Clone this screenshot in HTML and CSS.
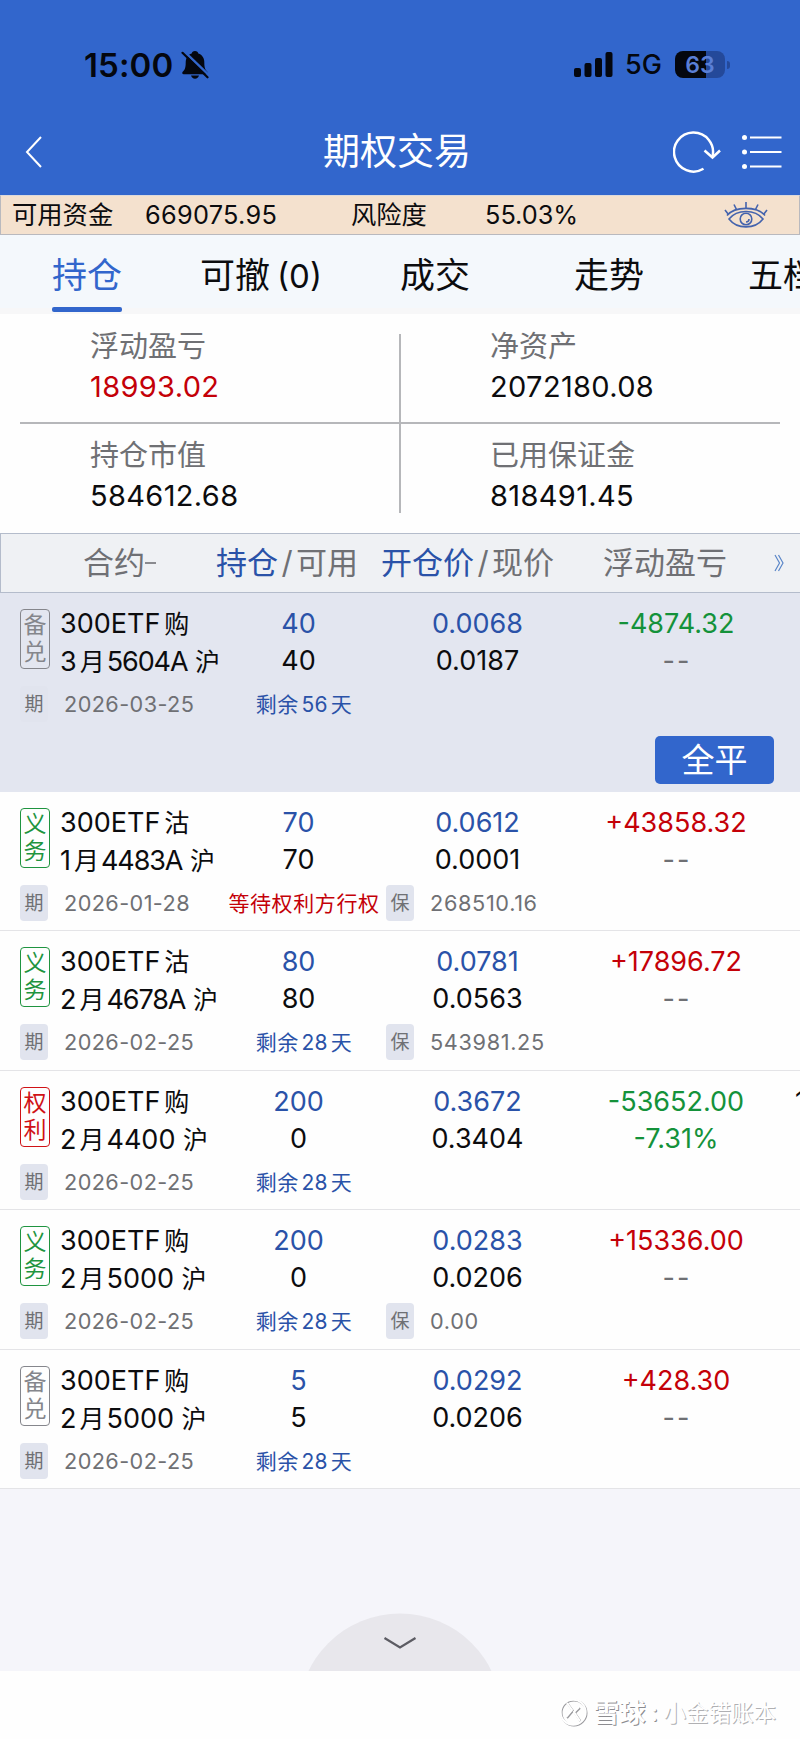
FILE: index.html
```html
<!DOCTYPE html>
<html lang="zh-CN">

<head>
	<meta charset="UTF-8">
	<meta name="viewport"
		content="width=device-width, initial-scale=1.0">
	<title>期权交易</title>
	<link rel="stylesheet" href="styles.css">
</head>

<body>
	<header class="header">
		<div class="status-bar">
			<span class="clock">15:00</span>
			<svg class="bell" viewBox="0 0 28 30">
				<path d="M14 1c2 0 3 1 3.300 2.600 4 1.300 6 4.800 6 8.800 0 5.500 1 7.200 3 9.300.9 1 .4 2.500-1 2.500H2.700c-1.400 0-1.900-1.500-1-2.500 2-2.100 3-3.800 3-9.300 0-4 2-7.500 6-8.800C11 2 12 1 14 1z" fill="#04070f" />
				<path d="M10 25.500h8c-.5 2-2 3.200-4 3.200s-3.500-1.200-4-3.200z" fill="#04070f" />
				<path d="M2.800 1.200L29 26.200" stroke="#3266cc" stroke-width="2.500" />
				<path d="M1.500 2.800L26.500 27.300" stroke="#04070f" stroke-width="2.200" stroke-linecap="round" />
			</svg>
			<svg class="signal" viewBox="0 0 39 26">
				<rect x="0" y="16" width="7" height="9" rx="2" />
				<rect x="10.500" y="11" width="7" height="14" rx="2" />
				<rect x="21" y="6" width="7" height="19" rx="2" />
				<rect x="31.500" y="0" width="7" height="25" rx="2" />
			</svg>
			<span class="network">5G</span>
			<span class="battery">63</span>
			<span class="battery-tip"></span>
		</div>
		<div class="nav">
			<svg class="back" viewBox="0 0 18 32">
				<path d="M16 1L2 16l14 15" />
			</svg>
			<h1 class="title">期权交易</h1>
			<svg class="refresh" viewBox="0 0 48 44">
				<path d="M30.500 38.800A19.500 19.500 0 1 1 39.500 26.500" />
				<path d="M31.500 20.500l8 7 7.500-7" />
			</svg>
			<svg class="menu" viewBox="0 0 40 34">
				<path d="M8 2.500h31.500M8 17h31.500M8 31.500h31.500" />
				<circle cx="2.500" cy="2.500" r="2.500" />
				<circle cx="2.500" cy="17" r="2.500" />
				<circle cx="2.500" cy="31.500" r="2.500" />
			</svg>
		</div>
	</header>

	<div class="funds">
		<span class="funds-label">可用资金</span>
		<span class="funds-value">669075.95</span>
		<span class="risk-label">风险度</span>
		<span class="risk-value">55.03%</span>
		<svg class="eye" viewBox="0 0 44 28">
			<path d="M5 18C13 8 31 8 39 18 31 28.500 13 28.500 5 18z" />
			<path d="M3 14.500C11 5 33 5 41 14.500" />
			<circle cx="22" cy="18" r="5.800" />
			<path d="M22 21a3 3 0 0 0 3-3M22 1v6M10 3.500l2.500 5M34 3.500l-2.500 5M1 9l3.500 4.500M43 9l-3.500 4.500" />
		</svg>
	</div>

	<nav class="tabs">
		<a class="tab active">持仓</a>
		<a class="tab">可撤<span class="count">(0)</span></a>
		<a class="tab">成交</a>
		<a class="tab">走势</a>
		<a class="tab">五档</a>
	</nav>

	<section class="summary">
		<div class="summary-item">
			<div class="summary-label">浮动盈亏</div>
			<div class="summary-value up">18993.02</div>
		</div>
		<div class="summary-item">
			<div class="summary-label">净资产</div>
			<div class="summary-value">2072180.08</div>
		</div>
		<div class="summary-item">
			<div class="summary-label">持仓市值</div>
			<div class="summary-value">584612.68</div>
		</div>
		<div class="summary-item">
			<div class="summary-label">已用保证金</div>
			<div class="summary-value">818491.45</div>
		</div>
	</section>

	<div class="list-head">
		<span class="head-contract">合约<i class="sort"></i></span>
		<span class="head-qty"><b>持仓</b><em>/</em>可用</span>
		<span class="head-price"><b>开仓价</b><em>/</em>现价</span>
		<span class="head-pnl">浮动盈亏</span>
		<svg class="more" viewBox="0 0 10 18">
			<path d="M1 1l4.500 8L1 17M4.500 1L9 9l-4.500 8" />
		</svg>
	</div>

	<main class="list">
		<article class="row selected">
			<div class="row-main">
				<div class="side covered">备<br>兑</div>
				<div class="name">300ETF<span class="kind">购</span><br>3<span class="month">月</span><span class="adjusted">5604A</span> <span class="market">沪</span></div>
				<div class="qty"><b>40</b><br>40</div>
				<div class="price"><b>0.0068</b><br>0.0187</div>
				<div class="pnl down">-4874.32<br><span class="none">--</span></div>
			</div>
			<div class="row-foot">
				<span class="tag">期</span>
				<span class="date">2026-03-25</span>
				<span class="remain">剩余<span class="days">56</span>天</span>
			</div>
			<button class="close-all">全平</button>
		</article>

		<article class="row">
			<div class="row-main">
				<div class="side duty">义<br>务</div>
				<div class="name">300ETF<span class="kind">沽</span><br>1<span class="month">月</span><span class="adjusted">4483A</span> <span class="market">沪</span></div>
				<div class="qty"><b>70</b><br>70</div>
				<div class="price"><b>0.0612</b><br>0.0001</div>
				<div class="pnl up">+43858.32<br><span class="none">--</span></div>
			</div>
			<div class="row-foot">
				<span class="tag">期</span>
				<span class="date">2026-01-28</span>
				<span class="remain waiting">等待权利方行权</span>
				<span class="tag">保</span>
				<span class="margin">268510.16</span>
			</div>
		</article>

		<article class="row">
			<div class="row-main">
				<div class="side duty">义<br>务</div>
				<div class="name">300ETF<span class="kind">沽</span><br>2<span class="month">月</span><span class="adjusted">4678A</span> <span class="market">沪</span></div>
				<div class="qty"><b>80</b><br>80</div>
				<div class="price"><b>0.0781</b><br>0.0563</div>
				<div class="pnl up">+17896.72<br><span class="none">--</span></div>
			</div>
			<div class="row-foot">
				<span class="tag">期</span>
				<span class="date">2026-02-25</span>
				<span class="remain">剩余<span class="days">28</span>天</span>
				<span class="tag">保</span>
				<span class="margin">543981.25</span>
			</div>
		</article>

		<article class="row">
			<div class="row-main">
				<div class="side right">权<br>利</div>
				<div class="name">300ETF<span class="kind">购</span><br>2<span class="month">月</span>4400 <span class="market">沪</span></div>
				<div class="qty"><b>200</b><br>0</div>
				<div class="price"><b>0.3672</b><br>0.3404</div>
				<div class="pnl down">-53652.00<br>-7.31%</div>
				<div class="next-col">1</div>
			</div>
			<div class="row-foot">
				<span class="tag">期</span>
				<span class="date">2026-02-25</span>
				<span class="remain">剩余<span class="days">28</span>天</span>
			</div>
		</article>

		<article class="row">
			<div class="row-main">
				<div class="side duty">义<br>务</div>
				<div class="name">300ETF<span class="kind">购</span><br>2<span class="month">月</span>5000 <span class="market">沪</span></div>
				<div class="qty"><b>200</b><br>0</div>
				<div class="price"><b>0.0283</b><br>0.0206</div>
				<div class="pnl up">+15336.00<br><span class="none">--</span></div>
			</div>
			<div class="row-foot">
				<span class="tag">期</span>
				<span class="date">2026-02-25</span>
				<span class="remain">剩余<span class="days">28</span>天</span>
				<span class="tag">保</span>
				<span class="margin">0.00</span>
			</div>
		</article>

		<article class="row">
			<div class="row-main">
				<div class="side covered">备<br>兑</div>
				<div class="name">300ETF<span class="kind">购</span><br>2<span class="month">月</span>5000 <span class="market">沪</span></div>
				<div class="qty"><b>5</b><br>5</div>
				<div class="price"><b>0.0292</b><br>0.0206</div>
				<div class="pnl up">+428.30<br><span class="none">--</span></div>
			</div>
			<div class="row-foot">
				<span class="tag">期</span>
				<span class="date">2026-02-25</span>
				<span class="remain">剩余<span class="days">28</span>天</span>
			</div>
		</article>
	</main>

	<div class="drawer">
		<svg class="drawer-handle" viewBox="0 0 184 58">
			<circle cx="92" cy="102" r="101.500" fill="#e8e7ec" />
			<path d="M76.500 25l15.500 9.500L107.500 25" fill="none" stroke="#5c5c63" stroke-width="2.200" />
		</svg>
	</div>

	<footer class="watermark">
		<svg class="xueqiu" viewBox="0 0 28 28">
			<g class="xueqiu-shade">
				<circle cx="14" cy="14" r="12.500" />
				<path d="M8 5l5 7-6 7M20 9l-5 5 6 9" />
			</g>
			<g class="xueqiu-light">
				<circle cx="13.200" cy="13.200" r="12.500" />
				<path d="M7 4l5 7-6 7M19 8l-5 5 6 9" />
			</g>
		</svg>
		<span class="brand">雪球</span>
		<span class="colon">:</span>
		<span class="author">小金错账本</span>
	</footer>
</body>

</html>
```
FILE: styles.css
```css
:root {
	--blue: #3266cc;
	--link: #2a52a8;
	--red: #c40008;
	--green: #14923a;
	--muted: #6f7074;
	--tag-bg: #e1e4ee;
}

* {
	box-sizing: border-box;
}

body {
	font-family: Inter, "Noto Sans CJK SC", sans-serif;
	font-weight: 400;
	background-color: #fefefe;
	color: #0c0c0e;
	margin: 0;
	height: 1739px;
	overflow: hidden;
	display: flex;
	flex-direction: column;
}

b,
em,
i {
	font-weight: inherit;
	font-style: normal;
}

/* header */
.header {
	height: 195px;
	background-color: var(--blue);
}

.status-bar {
	height: 108px;
	padding: 21px 70px 0 84px;
	display: flex;
	align-items: center;
	color: #04070f;
}

.clock {
	width: 97px;
	font-size: 33px;
	font-weight: 600;
	letter-spacing: 0.1px;
}

.bell {
	width: 28px;
	height: 30px;
}

.signal {
	width: 39px;
	height: 26px;
	margin-left: auto;
	fill: #04070f;
}

.network {
	width: 50px;
	margin-left: 12px;
	font-size: 27px;
	font-weight: 500;
}

.battery {
	width: 50px;
	height: 27px;
	border-radius: 8px;
	background: linear-gradient(90deg, #04070f 63%, #24499a 63%);
	color: #5a7fd6;
	font-size: 23px;
	font-weight: 600;
	line-height: 28px;
	text-align: center;
}

.battery-tip {
	width: 3px;
	height: 8px;
	margin-left: 2px;
	border-radius: 0 4px 4px 0;
	background-color: #24499a;
}

.nav {
	height: 87px;
	padding: 0 18px 0 25px;
	display: flex;
	align-items: center;
}

.nav svg {
	fill: none;
	stroke: #fff;
	stroke-width: 2;
}

.back {
	width: 18px;
	height: 32px;
}

.title {
	margin: 0 0 0 280px;
	width: 350px;
	color: #fff;
	font-size: 37px;
	font-weight: 400;
	line-height: 60px;
}

.nav .refresh {
	width: 48px;
	height: 44px;
	stroke-width: 2.5;
}

.nav .menu {
	width: 40px;
	height: 34px;
	margin-left: auto;
}

.menu circle {
	fill: #fff;
	stroke: none;
}

/* funds bar */
.funds {
	height: 40px;
	padding-left: 11px;
	border: 1px solid #b9b9be;
	border-top-color: #dcd9db;
	background-color: #f4e1ce;
	display: flex;
	align-items: center;
	font-size: 25.3px;
	line-height: 38px;
}

.funds-label {
	width: 133px;
}

.funds-value {
	width: 206px;
	letter-spacing: 0.3px;
}

.risk-label {
	width: 134px;
}

.risk-value {
	width: 239px;
}

.eye {
	width: 44px;
	height: 28px;
	fill: none;
	stroke: #4463ad;
	stroke-width: 1.6;
}

/* tabs */
.tabs {
	height: 79px;
	padding-left: 52px;
	background: linear-gradient(#f4f8fc 73px, #f7f7f8 73px);
	display: flex;
	overflow: hidden;
	white-space: nowrap;
	font-size: 35px;
	line-height: 81px;
}

.tab {
	flex: none;
	height: 79px;
	margin-right: 104px;
}

.tab:nth-child(1) {
	margin-right: 78px;
}

.tab:nth-child(2) {
	width: 122px;
	margin-right: 78px;
}

.tab.active {
	color: var(--blue);
}

.tab.active::after {
	content: '';
	display: block;
	height: 5px;
	margin-top: -9px;
	border-radius: 2px;
	background-color: var(--blue);
}

.count {
	margin-left: 7px;
	font-size: 33px;
}

/* summary */
.summary {
	height: 219px;
	padding: 0 20px;
	display: grid;
	grid-template-columns: 400px 360px;
	grid-template-rows: 109px 110px;
	background:
		linear-gradient(#b6b7ba, #b6b7ba) 20px 108px / 760px 2px no-repeat,
		linear-gradient(#b6b7ba, #b6b7ba) 399px 20px / 2px 179px no-repeat;
}

.summary-item {
	padding: 13px 0 0 70px;
}

.summary-label {
	color: var(--muted);
	font-size: 29px;
	line-height: 40px;
}

.summary-value {
	font-size: 29px;
	line-height: 40px;
	letter-spacing: 0.35px;
}

.up {
	color: var(--red);
}

.down {
	color: var(--green);
}

/* list header */
.list-head {
	height: 60px;
	border: 1px solid #b4bccb;
	border-right: 0;
	background-color: #eff1f4;
	display: flex;
	align-items: center;
	padding-left: 82px;
	color: var(--muted);
	font-size: 31px;
	line-height: 60px;
	white-space: nowrap;
}

.list-head b {
	color: var(--link);
}

.list-head em {
	display: inline-block;
	width: 18px;
	text-align: center;
}

.head-contract {
	width: 133px;
	display: flex;
	align-items: center;
}

.sort {
	width: 11px;
	height: 2px;
	background-color: #8a8b8f;
}

.head-qty {
	width: 165px;
}

.head-price {
	width: 222px;
}

.head-pnl {
	width: 171px;
}

.more {
	width: 10px;
	height: 18px;
	fill: none;
	stroke: #5a86c8;
	stroke-width: 1.2;
}

/* positions */
.row {
	height: 139.4px;
	padding-top: 12px;
	border-bottom: 1px solid #e4e4e7;
	overflow: hidden;
}

.row.selected {
	height: 199px;
	background-color: #e3e6f0;
	border-bottom: 0;
}

.row-main {
	height: 81px;
	padding-left: 20px;
	display: grid;
	grid-template-columns: 40px 140px 197px 160px 238px 20px;
	font-size: 27px;
	line-height: 37px;
	white-space: nowrap;
}

.side {
	width: 30px;
	height: 60px;
	margin-top: 4px;
	padding-top: 2px;
	border: 1px solid currentColor;
	border-radius: 4px;
	font-size: 23px;
	line-height: 27px;
	text-align: center;
}

.duty {
	color: #1f9440;
}

.right {
	color: #d01216;
}

.covered {
	color: #85868c;
}

.kind {
	margin-left: 4px;
	font-size: 25px;
}

.month {
	margin: 0 2px 0 3px;
	font-size: 25px;
}

.market {
	font-size: 25px;
}

/* adjusted contracts end in a letter and are set tighter */
.adjusted {
	letter-spacing: -1.1px;
}

.qty,
.price,
.pnl {
	text-align: center;
}

.price {
	padding-left: 1px;
}

.qty b,
.price b {
	color: var(--link);
}

.none {
	margin-left: 2px;
	color: var(--muted);
	letter-spacing: 2px;
}

.row-foot {
	height: 36px;
	padding-left: 20px;
	display: flex;
	align-items: center;
	color: var(--muted);
	font-size: 21.7px;
	white-space: nowrap;
}

.tag {
	width: 28px;
	height: 36px;
	border-radius: 4px;
	background-color: var(--tag-bg);
	font-size: 19px;
	line-height: 37px;
	text-align: center;
}

.date {
	width: 174px;
	padding-left: 16px;
	letter-spacing: 0.4px;
}

.remain {
	width: 164px;
	padding-bottom: 2px;
	text-align: center;
	color: var(--link);
	font-size: 21px;
	letter-spacing: 0.3px;
}

.waiting {
	color: var(--red);
	letter-spacing: 0.6px;
}

.days {
	margin: 0 3px;
}

.margin {
	margin-left: 16px;
	letter-spacing: 0.65px;
}

.close-all {
	display: block;
	width: 119px;
	height: 48px;
	margin: 14px 26px 0 auto;
	padding: 0;
	border: 0;
	border-radius: 5px;
	background-color: var(--blue);
	color: #fff;
	font: inherit;
	font-size: 33px;
	line-height: 48px;
}

/* bottom drawer */
.drawer {
	flex: 1;
	background-color: #f5f5fa;
	display: flex;
	align-items: flex-end;
	justify-content: center;
}

.drawer-handle {
	width: 184px;
	height: 58px;
}

.watermark {
	height: 68px;
	padding: 16px 24px 0 0;
	display: flex;
	align-items: center;
	justify-content: flex-end;
	color: #fff;
	text-shadow: 1px 1px 0 #8c8c90;
	line-height: 30px;
}

.xueqiu {
	width: 28px;
	height: 28px;
	margin-right: 5px;
	fill: none;
	stroke-width: 2;
}

.xueqiu-shade {
	stroke: #99999d;
}

.xueqiu-light {
	stroke: #fff;
}

.brand {
	font-size: 26px;
	font-weight: 700;
}

.colon {
	width: 18px;
	text-align: center;
	font-size: 24px;
}

.author {
	font-size: 22.5px;
	text-shadow: 1px 1px 0 #b0b0b3;
}
```
